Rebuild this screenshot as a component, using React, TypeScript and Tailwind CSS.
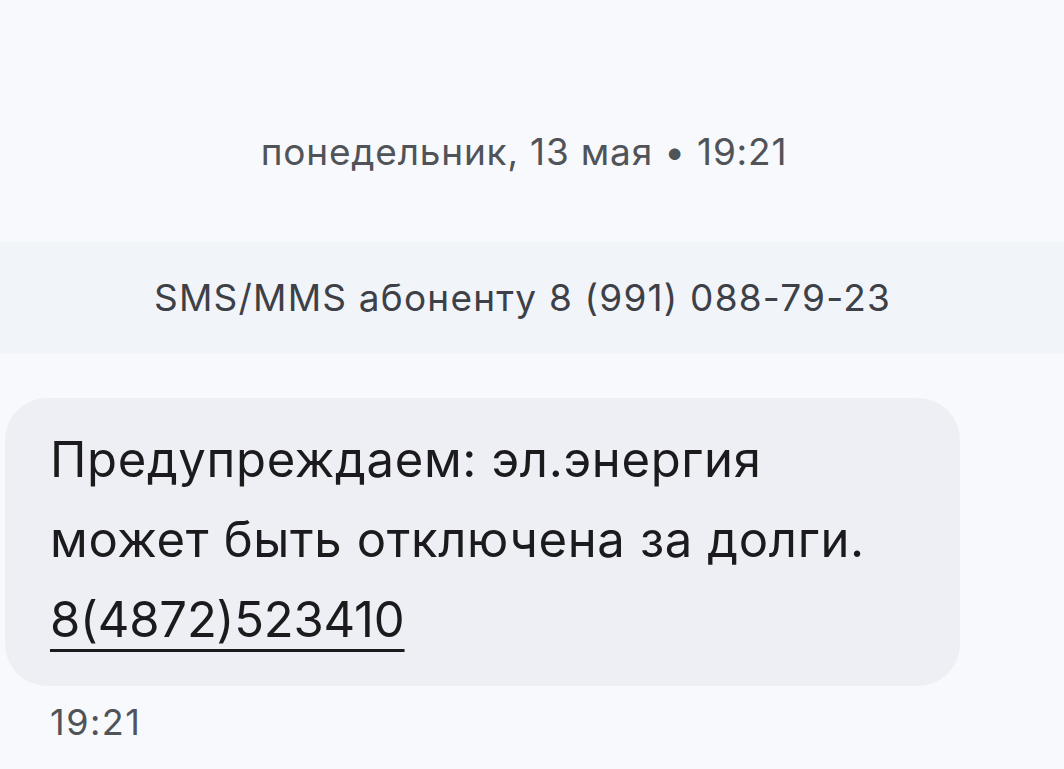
export default function App() {
  return (
    <div
      className="w-[1064px] h-[769px] overflow-hidden bg-[#f8f9fc] flex flex-col"
      style={{ fontFamily: 'Inter, "Liberation Sans", Arial, sans-serif' }}
    >
      {/* Date header */}
      <div className="h-[242px] flex items-start justify-center pt-[126px] pr-[16px]">
        <span className="text-[37px] leading-[52px] text-[#505358] tracking-[0.8px]">
          понедельник, 13 мая • 19:21
        </span>
      </div>

      {/* Recipient band */}
      <div className="h-[112px] bg-[#f1f4f9] flex items-center justify-center pr-[19px]">
        <span className="text-[37px] leading-[52px] text-[#3d4046] tracking-[1.2px]">
          SMS/MMS абоненту 8 (991) 088-79-23
        </span>
      </div>

      {/* Message bubble */}
      <div className="pt-[44px] pl-[5px]">
        <div className="w-[955px] h-[288px] rounded-[42px] bg-[#eeeff4] px-[45px] pt-[22px]">
          <p className="text-[49px] leading-[80px] text-[#1b1b1d] tracking-[0.65px]">
            Предупреждаем: эл.энергия
            <br />
            может быть отключена за долги.
            <br />
            <span className="underline decoration-[3px] underline-offset-[12px] tracking-[-0.2px]">8(4872)523410</span>
          </p>
        </div>
        <div className="pl-[45px] pt-[14px] text-[36px] leading-[44px] text-[#505358] tracking-[1.5px]">
          19:21
        </div>
      </div>
    </div>
  );
}
